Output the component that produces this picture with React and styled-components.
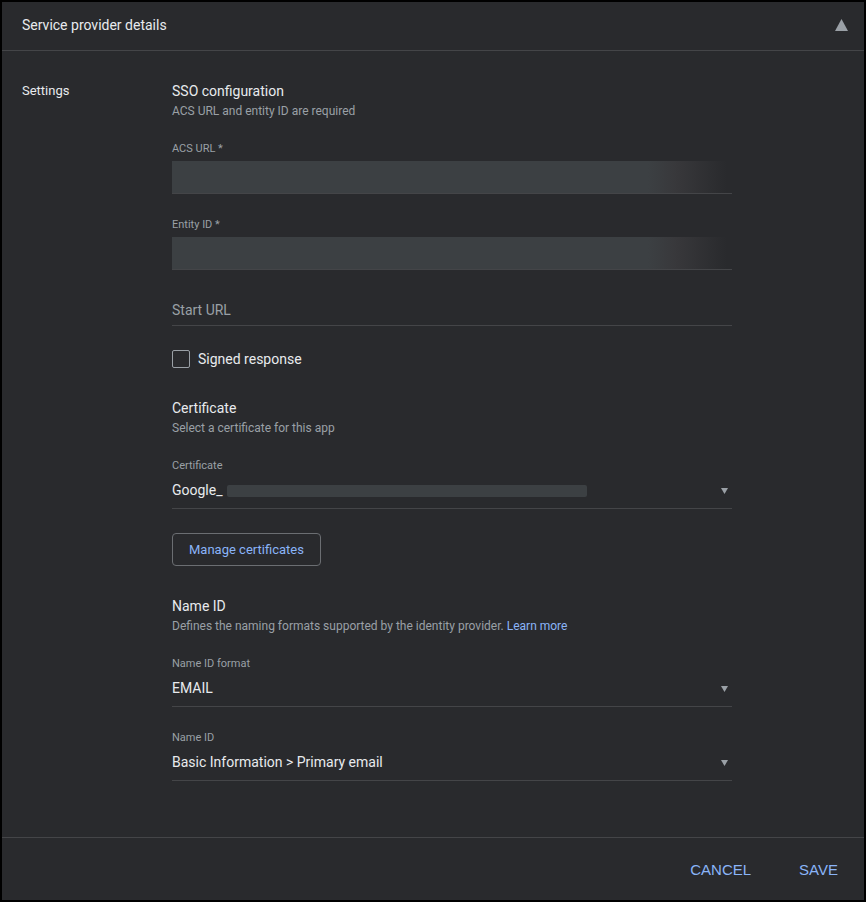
import React, { useState } from 'react';
import styled, { createGlobalStyle } from 'styled-components';

const GlobalStyle = createGlobalStyle`
	* {
		box-sizing: border-box;
	}

	body {
		margin: 0;
		background: #292a2d;
		color: #e8eaed;
		font-family: Roboto, 'Liberation Sans', sans-serif;
		font-size: 14px;
	}

	button, input, select {
		margin: 0;
		font: inherit;
		color: inherit;
	}
`;

const Panel = styled.form`
	min-height: 100vh;
	display: flex;
	flex-direction: column;
	border: 2px solid #000;
`;

const Header = styled.header`
	display: flex;
	align-items: center;
	justify-content: space-between;
	height: 49px;
	padding: 0 16px 2px 20px;
	border-bottom: 1px solid #444548;
`;

const HeaderTitle = styled.h1`
	margin: 0;
	font-size: 14px;
	font-weight: 400;
	line-height: 20px;
`;

const CollapseButton = styled.button`
	display: flex;
	padding: 0;
	border: none;
	background: none;
	color: #9aa0a6;
	cursor: pointer;
`;

const Body = styled.div`
	flex: 1;
	display: grid;
	grid-template-columns: 150px minmax(0, 560px);
	align-content: start;
	padding: 30px 20px 56px;
`;

const SideTitle = styled.h2`
	margin: 0;
	font-size: 13px;
	font-weight: 400;
	line-height: 20px;
`;

const Section = styled.section`
	display: flex;
	flex-direction: column;
	gap: 22px;
	margin-bottom: ${(props) => props.$space || 0}px;
`;

const SectionHead = styled.div`
	margin-bottom: -3px;
`;

const SectionTitle = styled.h3`
	margin: 0;
	font-size: 14px;
	font-weight: 400;
	line-height: 20px;
`;

const Description = styled.p`
	margin: 0;
	font-size: 12px;
	line-height: 20px;
	color: #9aa0a6;
`;

const Link = styled.a`
	color: #8ab4f8;
	text-decoration: none;
`;

const Field = styled.div`
	display: flex;
	flex-direction: column;
`;

const FieldLabel = styled.label`
	font-size: 11px;
	line-height: 18px;
	color: #9aa0a6;
`;

const TextInput = styled.input`
	width: 100%;
	height: 34px;
	padding: 2px 0 0;
	border: none;
	border-bottom: 1px solid #444548;
	border-radius: 0;
	background: none;
	outline: none;

	&::placeholder {
		color: #9aa0a6;
		opacity: 1;
	}
`;

const MaskedInput = styled(TextInput)`
	height: 33px;
	margin-top: 3px;
	background: linear-gradient(to right, #3c4043 85%, #38383b 90%, #292a2d 99%) border-box;
`;

const CheckRow = styled.label`
	display: flex;
	align-items: center;
	gap: 8px;
	height: 22px;
`;

const Checkbox = styled.input`
	appearance: none;
	width: 18px;
	height: 18px;
	border: 1px solid #9aa0a6;
	border-radius: 2px;

	&:checked {
		background: #8ab4f8;
	}
`;

const SelectBox = styled.div`
	position: relative;
`;

const Select = styled.select`
	display: block;
	appearance: none;
	width: 100%;
	height: 34px;
	padding: 0 20px 4px 0;
	border: none;
	border-bottom: 1px solid #444548;
	border-radius: 0;
	background: none;
	outline: none;

	option {
		background: #292a2d;
	}
`;

const SelectArrow = styled.svg`
	position: absolute;
	top: 13px;
	right: 4px;
	fill: #9aa0a6;
	pointer-events: none;
`;

const Redaction = styled.span`
	position: absolute;
	top: 10px;
	left: 55px;
	width: 360px;
	max-width: calc(100% - 80px);
	height: 12px;
	border-radius: 2px;
	background: #3c4043;
	pointer-events: none;
`;

const OutlineButton = styled.button`
	align-self: flex-start;
	height: 33px;
	margin-top: 2px;
	padding: 0 16px;
	border: 1px solid #6b6e72;
	border-radius: 4px;
	background: none;
	color: #8ab4f8;
	font-size: 13px;
	cursor: pointer;
`;

const Footer = styled.footer`
	display: flex;
	align-items: center;
	justify-content: flex-end;
	gap: 16px;
	height: 63px;
	padding: 0 10px;
	border-top: 1px solid #444548;
`;

const TextButton = styled.button`
	height: 36px;
	padding: 0 16px;
	border: none;
	background: none;
	color: #8ab4f8;
	font-family: 'Liberation Sans', sans-serif;
	font-size: 15px;
	cursor: pointer;
`;

function SelectField(props) {
	const { id, label, options, redacted } = props;

	return (
		<Field>
			<FieldLabel htmlFor={id}>{label}</FieldLabel>
			<SelectBox>
				<Select id={id}>
					{options.map((option) => (
						<option key={option}>{option}</option>
					))}
				</Select>
				{redacted && <Redaction />}
				<SelectArrow width='7' height='6' viewBox='0 0 7 6' aria-hidden='true'>
					<path d='M0 0h7L3.5 6z' />
				</SelectArrow>
			</SelectBox>
		</Field>
	);
}

function App() {
	const [open, setOpen] = useState(true);
	const [signed, setSigned] = useState(false);

	return (
		<>
			<GlobalStyle />
			<Panel onSubmit={(event) => event.preventDefault()}>
				<Header>
					<HeaderTitle>Service provider details</HeaderTitle>
					<CollapseButton
						type='button'
						aria-label='Toggle details'
						aria-expanded={open}
						onClick={() => setOpen(!open)}
					>
						<svg width='13' height='12' viewBox='0 0 13 12' fill='currentColor'>
							<path d={open ? 'M6.5 0L13 12H0z' : 'M0 0h13L6.5 12z'} />
						</svg>
					</CollapseButton>
				</Header>

				{open && (
					<Body>
						<SideTitle>Settings</SideTitle>
						<div>
							<Section $space={28}>
								<SectionHead>
									<SectionTitle>SSO configuration</SectionTitle>
									<Description>ACS URL and entity ID are required</Description>
								</SectionHead>
								<Field>
									<FieldLabel htmlFor='acs'>ACS URL *</FieldLabel>
									<MaskedInput id='acs' type='text' />
								</Field>
								<Field>
									<FieldLabel htmlFor='entity'>Entity ID *</FieldLabel>
									<MaskedInput id='entity' type='text' />
								</Field>
								<TextInput type='text' placeholder='Start URL' aria-label='Start URL' />
								<CheckRow>
									<Checkbox
										type='checkbox'
										checked={signed}
										onChange={(event) => setSigned(event.target.checked)}
									/>
									Signed response
								</CheckRow>
							</Section>

							<Section $space={30}>
								<SectionHead>
									<SectionTitle>Certificate</SectionTitle>
									<Description>Select a certificate for this app</Description>
								</SectionHead>
								<SelectField id='cert' label='Certificate' options={['Google_']} redacted />
								<OutlineButton type='button'>Manage certificates</OutlineButton>
							</Section>

							<Section>
								<SectionHead>
									<SectionTitle>Name ID</SectionTitle>
									<Description>
										Defines the naming formats supported by the identity provider.{' '}
										<Link href='#'>Learn more</Link>
									</Description>
								</SectionHead>
								<SelectField id='format' label='Name ID format' options={['EMAIL']} />
								<SelectField
									id='name-id'
									label='Name ID'
									options={['Basic Information > Primary email']}
								/>
							</Section>
						</div>
					</Body>
				)}

				<Footer>
					<TextButton type='button'>CANCEL</TextButton>
					<TextButton type='submit'>SAVE</TextButton>
				</Footer>
			</Panel>
		</>
	);
}

export default App;
